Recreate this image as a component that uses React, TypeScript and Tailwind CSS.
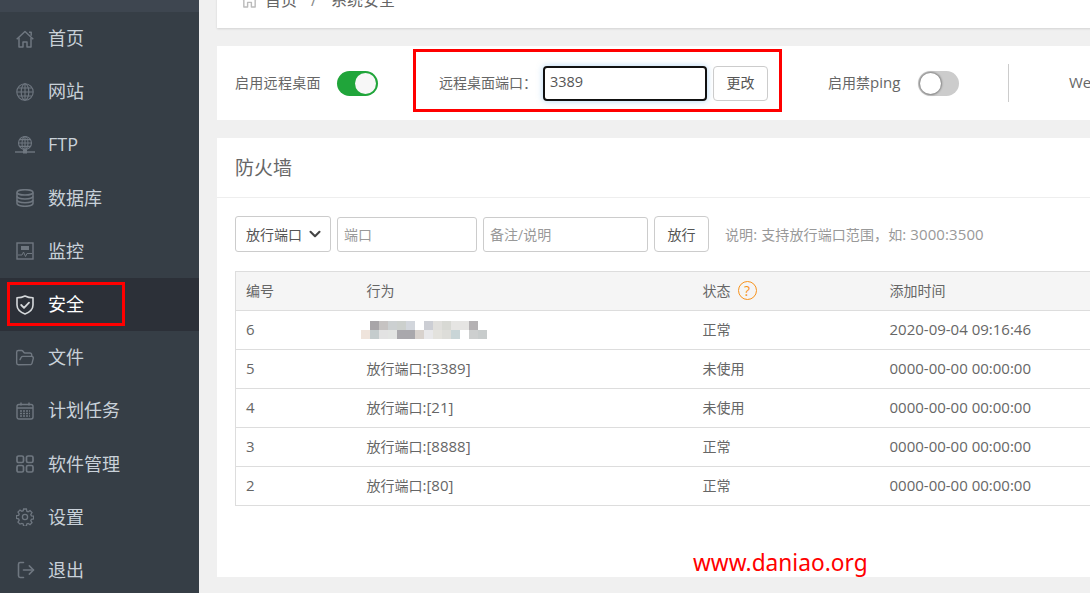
import { FolderOpen, LogOut, ChevronDown } from "lucide-react";

const iconClass = "w-[18px] h-[18px] text-[#6f7780]";

function HomeIcon({ className = iconClass }: { className?: string }) {
    return (
        <svg viewBox="0 0 18 18" className={className} fill="none" stroke="currentColor" strokeWidth="1.5" strokeLinejoin="round">
            <path d="M.7 9.2 9 1.5l8.3 7.7" />
            <path d="M3 7.8V17h4v-5h4v5h4V7.8" />
            <path d="M13 2.2h2.2v3.6" />
        </svg>
    );
}

function GlobeIcon() {
    return (
        <svg viewBox="0 0 18 18" className={iconClass} fill="none" stroke="currentColor" strokeWidth="1.1">
            <circle cx="9" cy="9" r="8.2" />
            <ellipse cx="9" cy="9" rx="3.8" ry="8.2" />
            <path d="M9 1v16M1 9h16M2.2 5h13.6M2.2 13h13.6" />
        </svg>
    );
}

function FtpIcon() {
    return (
        <svg viewBox="0 0 20 18" className="w-[20px] h-[18px] -ml-[1px] text-[#6f7780]" fill="none" stroke="currentColor" strokeWidth="1.1">
            <circle cx="10" cy="7" r="6.5" />
            <ellipse cx="10" cy="7" rx="3" ry="6.5" />
            <path d="M10 .5v13M3.5 7h13M4.5 3.6h11M4.5 10.4h11" />
            <path d="M0 16h20" strokeWidth="1.4" />
            <rect x="8" y="13.5" width="4" height="4" fill="currentColor" stroke="none" />
        </svg>
    );
}

function DatabaseIcon() {
    return (
        <svg viewBox="0 0 18 18" className={iconClass} fill="none" stroke="currentColor" strokeWidth="1.5">
            <ellipse cx="9" cy="3.4" rx="8" ry="2.7" />
            <path d="M1 3.4v11.2C1 16.1 4.6 17.3 9 17.3s8-1.2 8-2.7V3.4" />
            <path d="M1 7.2c0 1.5 3.6 2.7 8 2.7s8-1.2 8-2.7M1 11c0 1.5 3.6 2.7 8 2.7s8-1.2 8-2.7" />
        </svg>
    );
}

function MonitorIcon() {
    return (
        <svg viewBox="0 0 18 18" className={iconClass} fill="none" stroke="currentColor" strokeWidth="1.4">
            <rect x="1" y="1" width="16" height="16" />
            <path d="M5 4h8v4H5z" fill="currentColor" stroke="none" />
            <path d="M2 13h4l1.5-3 2 4.5 1.5-3h5" strokeWidth="1" />
        </svg>
    );
}

function ShieldIcon() {
    return (
        <svg viewBox="0 0 18 20" className="w-[18px] h-[20px] text-[#d5d8db]" fill="none" stroke="currentColor" strokeWidth="1.6" strokeLinejoin="round">
            <path d="M9 1c2.6 1.3 5 1.8 8 1.8V10c0 4.2-3.4 7.2-8 9-4.6-1.8-8-4.8-8-9V2.800c3 0 5.400-.5 8-1.800z" />
            <path d="m5.200 10 2.800 2.800 5-5.200" strokeWidth="1.800" strokeLinecap="round" />
        </svg>
    );
}

function CalendarIcon() {
    return (
        <svg viewBox="0 0 18 18" className={iconClass} fill="none" stroke="currentColor" strokeWidth="1.4">
            <rect x="1" y="2.500" width="16" height="14.500" rx="2" />
            <path d="M5 .5v3M13 .5v3M1 6h16" />
            <path d="M4 9h10M4 11.500h10M4 14h10" strokeDasharray="2 1" />
        </svg>
    );
}

function AppsIcon() {
    return (
        <svg viewBox="0 0 18 18" className={iconClass} fill="none" stroke="currentColor" strokeWidth="1.7">
            <rect x="1" y="1" width="6.500" height="6.500" rx="1.600" />
            <rect x="10.500" y="1" width="6.500" height="6.500" rx="1.600" />
            <rect x="1" y="10.500" width="6.500" height="6.500" rx="1.600" />
            <rect x="10.500" y="10.500" width="6.500" height="6.500" rx="1.600" />
        </svg>
    );
}

function GearIcon() {
    return (
        <svg viewBox="0 0 18 18" className={iconClass} fill="none" stroke="currentColor" strokeWidth="1.3">
            <circle cx="9" cy="9" r="2.600" />
            <path d="M7.600 1h2.800l.4 2.200 1.300.6 1.900-1.200 2 2-1.200 1.900.6 1.300 2.200.4v2.800l-2.200.4-.6 1.300 1.200 1.900-2 2-1.900-1.200-1.300.6-.4 2.200H7.600l-.4-2.200-1.300-.6L4 16.100l-2-2 1.200-1.900-.6-1.300-2.200-.4V7.700l2.200-.4.6-1.300L2 4.100l2-2 1.900 1.200 1.300-.6z" />
        </svg>
    );
}

const navItems = [
    { label: "首页", icon: <HomeIcon /> },
    { label: "网站", icon: <GlobeIcon /> },
    { label: "FTP", icon: <FtpIcon /> },
    { label: "数据库", icon: <DatabaseIcon /> },
    { label: "监控", icon: <MonitorIcon /> },
    { label: "安全", icon: <ShieldIcon />, active: true },
    { label: "文件", icon: <FolderOpen className="w-[20px] h-[20px] -ml-[1px] text-[#6f7780]" strokeWidth={1.7} /> },
    { label: "计划任务", icon: <CalendarIcon /> },
    { label: "软件管理", icon: <AppsIcon /> },
    { label: "设置", icon: <GearIcon /> },
    { label: "退出", icon: <LogOut className="w-[20px] h-[20px] text-[#6f7780]" strokeWidth={1.9} /> },
];

const rows = [
    { id: 6, port: null, status: "正常", time: "2020-09-04 09:16:46" },
    { id: 5, port: ":[3389]", status: "未使用", time: "0000-00-00 00:00:00" },
    { id: 4, port: ":[21]", status: "未使用", time: "0000-00-00 00:00:00" },
    { id: 3, port: ":[8888]", status: "正常", time: "0000-00-00 00:00:00" },
    { id: 2, port: ":[80]", status: "正常", time: "0000-00-00 00:00:00" },
];

const mosaicTop = ["#a8a5a8", "#c6c3c2", "#ccd0d1", "#ccd0cd", "#d2d6dc", "#ffffff", "#ccced4", "#e0dfdc", "#d8d9d4", "#e6e5e3", "#e6e5e3", "#b4b1b3"];
const mosaicBottom = ["#efe4dc", "#c5cccd", "#e2e2e2", "#e2e4e2", "#a9a8ac", "#a9a8ac", "#d8d2cd", "#e8e8ea", "#e3e2dd", "#ddddd9", "#c9d5d7", "#ffffff", "#cdcfcf", "#c8cccc"];

function Mosaic() {
    return (
        <svg width="180" height="18" viewBox="0 0 180 18" className="block">
            {mosaicTop.map((c, i) => (
                <rect key={i} x={9 + i * 9} y="0" width="9" height="9" fill={c} />
            ))}
            {mosaicBottom.map((c, i) => (
                <rect key={i} x={i * 9} y="9" width="9" height="9" fill={c} />
            ))}
        </svg>
    );
}

function Toggle({ on }: { on: boolean }) {
    return (
        <div className={`w-[41px] h-[25px] rounded-full p-[2px] flex shrink-0 ${on ? "bg-[#20a53a] justify-end" : "bg-[#cccccc] justify-start"}`}>
            <div className={`w-[21px] h-[21px] rounded-full ${on ? "bg-[#f7f7f7]" : "bg-white shadow-[0_0_2px_1px_rgba(0,0,0,0.35)]"}`} />
        </div>
    );
}

export default function App() {
    return (
        <div
            className="w-[1090px] h-[593px] flex overflow-hidden bg-[#f0f0f0] text-[14px] text-[#666666]"
            style={{ fontFamily: '"Open Sans", "Noto Sans CJK SC", sans-serif' }}
        >
            <aside className="relative w-[199px] shrink-0 bg-[#363e46]">
                <div className="h-[12px] bg-[#3e4650]" />
                {navItems.map((item) => (
                    <div
                        key={item.label}
                        className={`h-[53.2px] flex items-center pl-[16px] text-[18px] ${item.active ? "bg-[#2c3038] text-white" : "text-[#c9d1d9]"}`}
                    >
                        <span className="w-[32px] flex items-center">{item.icon}</span>
                        {item.label}
                    </div>
                ))}
                <div className="absolute left-[7px] top-[282px] w-[118px] h-[44px] border-[3px] border-[#ff0000]" />
            </aside>

            <main className="relative flex-1 min-w-0 pl-[18px] overflow-hidden">
                <div className="w-[1000px] -mt-[29px] h-[57px] bg-white shadow-[0_1px_2px_rgba(0,0,0,0.12)] flex items-center pl-[24px] text-[16px]">
                    <HomeIcon className="w-[17px] h-[17px] text-[#bbbbbb] mr-[7px]" />
                    <span>首页</span>
                    <span className="mx-[14px] text-[#888888]">/</span>
                    <span>系统安全</span>
                </div>

                <div className="w-[1000px] h-[74px] mt-[18px] bg-white flex items-center pl-[18px] whitespace-nowrap">
                    <span className="w-[86px] pb-[2px] tracking-[0.3px]">启用远程桌面</span>
                    <div className="ml-[16px]">
                        <Toggle on />
                    </div>
                    <span className="ml-[61px] w-[104px] pb-[2px]">远程桌面端口：</span>
                    <div className="w-[164px] h-[35px] border-2 border-[#111111] rounded-[4px] pl-[5px] pb-[2px] flex items-center text-[14.5px] text-[#555555] shadow-[0_0_6px_rgba(102,175,233,0.5)]">
                        3389
                    </div>
                    <button className="ml-[6px] w-[55px] h-[35px] pb-[2px] border border-[#cccccc] rounded-[4px] text-[#555555]">更改</button>
                    <span className="ml-[60px] w-[74px] pb-[2px]">
                        启用禁<span className="text-[15px]">ping</span>
                    </span>
                    <div className="ml-[16px]">
                        <Toggle on={false} />
                    </div>
                    <div className="ml-[49px] w-px h-[38px] bg-[#cccccc]" />
                    <span className="ml-[60px] pb-[2px] text-[15px]">Web日志</span>
                </div>

                <div className="w-[1000px] h-[439px] mt-[18px] bg-white">
                    <h2 className="h-[60px] pl-[18px] pt-[2px] flex items-center text-[19px] font-normal border-b border-[#eeeeee]">防火墙</h2>
                    <div className="pl-[18px] pt-[18px]">
                        <div className="flex items-center h-[36px] whitespace-nowrap">
                            <div className="w-[96px] h-[36px] border border-[#cccccc] rounded-[3px] pl-[10px] flex items-center text-[#555555]">
                                放行端口
                                <ChevronDown className="w-[18px] h-[18px] ml-[4px] text-[#444444]" strokeWidth={2.8} />
                            </div>
                            <input className="ml-[6px] mt-[1px] w-[140px] h-[35px] border border-[#cccccc] rounded-[3px] pl-[6px] outline-none placeholder:text-[#999999]" placeholder="端口" />
                            <input className="ml-[6px] mt-[1px] w-[165px] h-[35px] border border-[#cccccc] rounded-[3px] pl-[6px] outline-none placeholder:text-[#999999]" placeholder="备注/说明" />
                            <button className="ml-[6px] w-[55px] h-[36px] border border-[#cccccc] rounded-[4px] text-[#555555]">放行</button>
                            <span className="ml-[16px] text-[#999999] tracking-[0.1px]">
                                说明<span className="text-[15px]">: </span>支持放行端口范围，如<span className="text-[15px]">: 3000:3500</span>
                            </span>
                        </div>
                        <table className="mt-[19px] w-[983px] table-fixed border-collapse border border-[#dddddd] text-left">
                            <colgroup>
                                <col className="w-[121px]" />
                                <col className="w-[336px]" />
                                <col className="w-[187px]" />
                                <col />
                            </colgroup>
                            <thead>
                                <tr className="h-[39px] bg-[#f5f5f5] border-b border-[#dddddd]">
                                    <th className="pl-[10px] pb-[2px] font-normal">编号</th>
                                    <th className="pl-[10px] pb-[2px] font-normal">行为</th>
                                    <th className="pl-[10px] pb-[2px] font-normal">
                                        <span className="flex items-center">
                                            状态
                                            <span className="ml-[7px] mt-[1px] w-[19px] h-[19px] rounded-full border-[1.5px] border-[#f7931e] text-[#f7931e] flex items-center justify-center text-[14px]">?</span>
                                        </span>
                                    </th>
                                    <th className="pl-[10px] pb-[2px] font-normal">添加时间</th>
                                </tr>
                            </thead>
                            <tbody>
                                {rows.map((r) => (
                                    <tr key={r.id} className="h-[39px] border-b border-[#dddddd]">
                                        <td className="pl-[10px] pb-[2px] text-[15px]">{r.id}</td>
                                        <td className={r.port ? "pl-[10px] pb-[2px]" : "pl-[4px]"}>
                                            {r.port ? (
                                                <>
                                                    放行端口<span className="text-[15px]">{r.port}</span>
                                                </>
                                            ) : (
                                                <Mosaic />
                                            )}
                                        </td>
                                        <td className="pl-[10px] pb-[2px]">{r.status}</td>
                                        <td className="pl-[10px] pb-[2px] text-[15px]">{r.time}</td>
                                    </tr>
                                ))}
                            </tbody>
                        </table>
                    </div>
                </div>

                <div className="absolute left-[214px] top-[49px] w-[369px] h-[63px] border-[3px] border-[#ff0000]" />
                <div className="absolute left-[494px] top-[546px] text-[22.7px] leading-[34px] text-[#ff0000]" style={{ fontFamily: '"Noto Sans", sans-serif' }}>
                    www.daniao.org
                </div>
            </main>
        </div>
    );
}
